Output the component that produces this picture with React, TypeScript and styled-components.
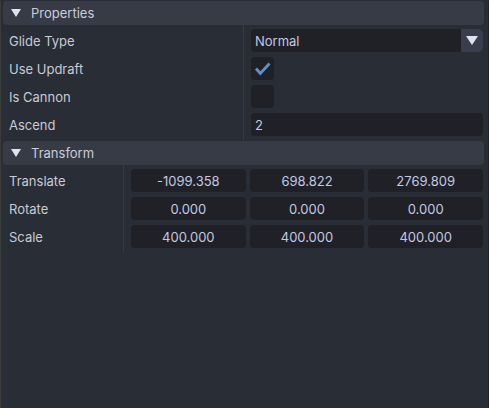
import styled, { createGlobalStyle } from "styled-components";

const GlobalStyle = createGlobalStyle`
  html, body {
    margin: 0;
    padding: 0;
    background: #292d36;
  }
  body {
    font-family: Inter, "Noto Sans", sans-serif;
    font-size: 13px;
  }
`;

const Panel = styled.div`
  box-sizing: border-box;
  width: 489px;
  height: 408px;
  background: #292d36;
  border-left: 1px solid #3b3b3a;
  border-right: 1px solid #1f2228;
`;

const Header = styled.div`
  display: flex;
  align-items: center;
  gap: 10px;
  height: 24px;
  margin: 1px 4px 0 2px;
  padding-left: 8px;
  border-radius: 4px;
  background: #373b46;
  color: #c9cdda;
`;

const Caret = styled.span<{ $size: number }>`
  width: 0;
  height: 0;
  border-left: ${(p) => p.$size / 2}px solid transparent;
  border-right: ${(p) => p.$size / 2}px solid transparent;
  border-top: ${(p) => Math.round(p.$size * 0.72)}px solid #dfe2f2;
`;

const Grid = styled.div<{ $cols: string }>`
  display: grid;
  grid-template-columns: ${(p) => p.$cols};
  padding: 0 5px 0 0;
`;

const LabelCol = styled.div`
  display: flex;
  flex-direction: column;
  gap: 5px;
  padding: 4px 0 4px 8px;
  border-right: 1px solid #393b3e;
`;

const FieldCol = styled.div`
  display: flex;
  flex-direction: column;
  gap: 5px;
  padding: 4px 0 4px 7px;
`;

const Label = styled.div`
  height: 23px;
  display: flex;
  align-items: center;
  color: #c8cbd5;
`;

const Row = styled.div`
  display: grid;
  grid-template-columns: 1fr 1fr 1fr;
  gap: 4px;
`;

const Field = styled.div<{ $center?: boolean }>`
  box-sizing: border-box;
  height: 23px;
  display: flex;
  align-items: center;
  justify-content: ${(p) => (p.$center ? "center" : "flex-start")};
  padding: 0 4px;
  border-radius: 4px;
  background: #1f2127;
  color: #c3c8e4;
  overflow: hidden;
`;

const Select = styled(Field)`
  padding-right: 0;
  justify-content: space-between;
`;

const SelectButton = styled.div`
  width: 22px;
  height: 23px;
  display: flex;
  align-items: center;
  justify-content: center;
  background: #3a3d4b;
  border-radius: 0 4px 4px 0;
`;

const Check = styled.div`
  width: 23px;
  height: 23px;
  border-radius: 4px;
  background: #1f2127;
  display: flex;
  align-items: center;
  justify-content: center;
`;

const properties = ["Glide Type", "Use Updraft", "Is Cannon", "Ascend"];

const transform = [
  { name: "Translate", values: ["-1099.358", "698.822", "2769.809"] },
  { name: "Rotate", values: ["0.000", "0.000", "0.000"] },
  { name: "Scale", values: ["400.000", "400.000", "400.000"] },
];

const App = () => (
  <>
    <GlobalStyle />
    <Panel>
      <Header>
        <Caret $size={11} />
        Properties
      </Header>
      <Grid $cols="243px 1fr">
        <LabelCol>
          {properties.map((p) => (
            <Label key={p}>{p}</Label>
          ))}
        </LabelCol>
        <FieldCol>
          <Select>
            Normal
            <SelectButton>
              <Caret $size={12} />
            </SelectButton>
          </Select>
          <Check>
            <svg width="23" height="23" viewBox="0 0 23 23">
              <path
                d="M5 11.5 L9.3 16.5 L18.5 6.5"
                fill="none"
                stroke="#5a93d0"
                strokeWidth="2.8"
              />
            </svg>
          </Check>
          <Check />
          <Field>2</Field>
        </FieldCol>
      </Grid>
      <Header>
        <Caret $size={11} />
        Transform
      </Header>
      <Grid $cols="123px 1fr">
        <LabelCol>
          {transform.map((t) => (
            <Label key={t.name}>{t.name}</Label>
          ))}
        </LabelCol>
        <FieldCol>
          {transform.map((t) => (
            <Row key={t.name}>
              {t.values.map((v, i) => (
                <Field key={i} $center>
                  {v}
                </Field>
              ))}
            </Row>
          ))}
        </FieldCol>
      </Grid>
    </Panel>
  </>
);

export default App;
